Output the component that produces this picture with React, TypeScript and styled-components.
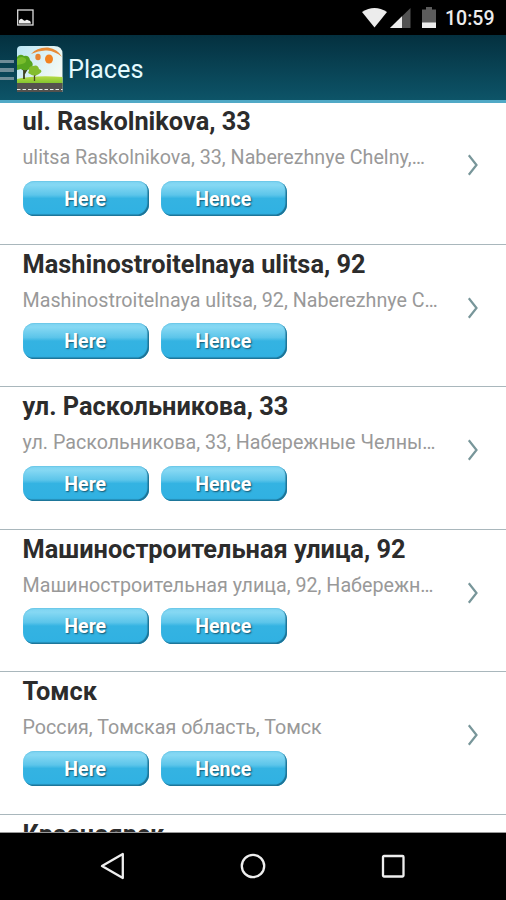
import React from 'react';
import styled, { createGlobalStyle } from 'styled-components';

const GlobalStyle = createGlobalStyle`
  * { box-sizing: border-box; }
  body { margin: 0; background: #000; font-family: Roboto, "Noto Sans", sans-serif; }
`;

const Screen = styled.div`
  display: flex;
  flex-direction: column;
  width: 506px;
  height: 900px;
  overflow: hidden;
  background: #fff;
`;

const StatusBar = styled.div`
  display: flex;
  align-items: center;
  justify-content: space-between;
  flex: none;
  height: 35px;
  padding: 0 11px 0 16px;
  background: #000;
`;

const StatusIcons = styled.div`
  display: flex;
  align-items: center;
`;

const SignalSlot = styled.span`
  display: flex;
  margin: 0 11px 0 3px;
`;

const Clock = styled.span`
  width: 50px;
  margin-left: 9px;
  padding-top: 3px;
  color: #ececec;
  font-size: 19.5px;
  font-weight: 500;
  line-height: 24px;
  white-space: nowrap;
`;

const Header = styled.header`
  display: flex;
  align-items: center;
  flex: none;
  height: 68px;
  background: linear-gradient(#04303f, #0d5468);
  border-bottom: 3px solid #50a9c6;
`;

const HeaderTitle = styled.h1`
  margin: 5px 0 0 5px;
  color: #e4fbff;
  font-size: 25.3px;
  font-weight: 400;
  line-height: 32px;
`;

const Drawer = styled.div`
  display: flex;
  flex-direction: column;
  gap: 5px;
  width: 17px;
  margin-top: 5px;
`;

const DrawerLine = styled.span`
  width: 14px;
  height: 3.5px;
  background: #6f8d98;
`;

const AppTile = styled.span`
  display: flex;
  margin-top: 2px;
`;

const List = styled.main`
  flex: none;
  height: 731px;
  overflow: hidden;
  margin-top: -1px;
  border-bottom: 1px solid #999;
`;

const Row = styled.section`
  display: flex;
  align-items: center;
  justify-content: space-between;
  height: 142.5px;
  padding: 0 27.5px 0 22.5px;
  border-bottom: 1px solid #a9b7bc;
`;

const LastRow = styled.section`
  padding: 0 22.5px;
`;

const RowBody = styled.div`
  align-self: flex-start;
`;

const PlaceName = styled.h2`
  margin: 4px 0 0;
  color: #2c2c2c;
  font-size: 25.35px;
  font-weight: 700;
  line-height: 31px;
  white-space: nowrap;
`;

const Address = styled.p`
  margin: 8px 0 0;
  color: #999;
  font-size: 19.7px;
  line-height: 26px;
  white-space: nowrap;
`;

const Actions = styled.div`
  display: flex;
  gap: 11.5px;
  margin-top: 9.5px;
`;

const ActionButton = styled.button`
  width: 126.5px;
  height: 35.5px;
  padding: 2px 1px 0 0;
  border: 0;
  border-radius: 11.5px;
  background: linear-gradient(#7fd4f2 0%, #85d8f3 12%, #5cc5ea 40%, #34b3e2 50%, #30b1e2 100%);
  box-shadow: inset -1.5px -1.5px 0.8px #1d7396, inset 0 1px 1px #6cc8e8;
  color: #fff;
  font-family: inherit;
  font-size: 19.5px;
  font-weight: 700;
  text-shadow: 1px 1px 1.5px #17566f;
`;

const ChevronSlot = styled.span`
  display: flex;
  margin-top: -15px;
`;

const NavBar = styled.nav`
  display: flex;
  align-items: center;
  justify-content: space-between;
  flex: 1;
  padding: 0 100px 1px;
  background: #000;
`;

const places = [
  { name: 'ul. Raskolnikova, 33', address: 'ulitsa Raskolnikova, 33, Naberezhnye Chelny,…' },
  { name: 'Mashinostroitelnaya ulitsa, 92', address: 'Mashinostroitelnaya ulitsa, 92, Naberezhnye C…' },
  { name: 'ул. Раскольникова, 33', address: 'ул. Раскольникова, 33, Набережные Челны…' },
  { name: 'Машиностроительная улица, 92', address: 'Машиностроительная улица, 92, Набережн…' },
  { name: 'Томск', address: 'Россия, Томская область, Томск' },
];

const PictureIcon = () => (
  <svg width="19" height="17" viewBox="0 0 19 17">
    <rect x="1.7" y="1" width="15.3" height="15" fill="none" stroke="#ddd" strokeWidth="1.3" />
    <path d="M3 14.5v-3q2-3 4-.8 1 1 2 1 2-2 3.500-.2 2-.5 2.500 3z" fill="#eee" />
  </svg>
);

const WifiIcon = () => (
  <svg width="25" height="20" viewBox="0 0 25 20">
    <path d="M0 4Q12.500-4 25 4L12.500 19.500Z" fill="#ececec" />
  </svg>
);

const SignalIcon = () => (
  <svg width="21" height="20" viewBox="0 0 21 20">
    <path d="M0 20 20.500 0V20Z" fill="#525252" />
    <path d="M0 20 12 8.300V20Z" fill="#ececec" />
  </svg>
);

const BatteryIcon = () => (
  <svg width="14" height="21" viewBox="0 0 14 21">
    <path d="M0 2.500H4V0H10V2.500H14V16H0Z" fill="#5c5c5c" />
    <path d="M0 15.500H14V21H0Z" fill="#ececec" />
  </svg>
);

const AppIcon = () => (
  <svg width="46" height="46" viewBox="0 0 46 46">
    <defs>
      <linearGradient id="sky" x1="0" y1="0" x2="1" y2=".6">
        <stop offset="0" stopColor="#bce6f5" />
        <stop offset="1" stopColor="#f7fbf4" />
      </linearGradient>
      <linearGradient id="grass" x1="0" y1="0" x2="0" y2="1">
        <stop offset="0" stopColor="#b6db43" />
        <stop offset="1" stopColor="#6dbb28" />
      </linearGradient>
      <clipPath id="tile"><path d="M0 4Q0 0 4 0H37Q45.500 0 45.500 8V46H0Z" /></clipPath>
    </defs>
    <g clipPath="url(#tile)">
      <rect width="46" height="46" fill="url(#sky)" />
      <path d="M14 8Q20 1 31 1.500Q41 3 45 11Q38 5 30 4.500Q22 4 14 8Z" fill="#e88a35" />
      <ellipse cx="21" cy="11" rx="2.700" ry="3.200" fill="#e88432" />
      <ellipse cx="32" cy="13" rx="4" ry="4.500" fill="#f28320" />
      <path d="M0 33Q18 29 46 31V40H0Z" fill="url(#grass)" />
      <path d="M7 33V24L2 20M7 28L11 21" stroke="#3d401f" strokeWidth="1.800" fill="none" />
      <path d="M0 11Q3 7 7 10Q12 9 13 14Q18 18 14 22Q9 26 4 23L0 24Z" fill="#56a51f" />
      <path d="M0 13Q5 9 9 13Q10 17 5 18L0 19Z" fill="#78bd2c" />
      <path d="M17.500 35V26M17.500 30L21 25" stroke="#4b4823" strokeWidth="1.300" />
      <path d="M12 25Q11 20 16 20Q21 18 22 23Q27 25 22 28Q17 31 13 28Q10 27 12 25Z" fill="#83bd2d" />
      <rect y="37" width="46" height="9" fill="#55524e" />
      <path d="M0 43.500H46" stroke="#e8eeee" strokeWidth="1.200" strokeDasharray="3.500 2" />
    </g>
  </svg>
);

const Chevron = () => (
  <svg width="12" height="22" viewBox="0 0 12 22">
    <path d="M1.800 1.300 9.500 11 1.800 20.700" fill="none" stroke="#78969a" strokeWidth="2.200" />
  </svg>
);

const App = () => (
  <>
    <GlobalStyle />
    <Screen>
      <StatusBar>
        <PictureIcon />
        <StatusIcons>
          <WifiIcon />
          <SignalSlot><SignalIcon /></SignalSlot>
          <BatteryIcon />
          <Clock>10:59</Clock>
        </StatusIcons>
      </StatusBar>
      <Header>
        <Drawer><DrawerLine /><DrawerLine /><DrawerLine /></Drawer>
        <AppTile><AppIcon /></AppTile>
        <HeaderTitle>Places</HeaderTitle>
      </Header>
      <List>
        {places.map((place) => (
          <Row key={place.name}>
            <RowBody>
              <PlaceName>{place.name}</PlaceName>
              <Address>{place.address}</Address>
              <Actions>
                <ActionButton>Here</ActionButton>
                <ActionButton>Hence</ActionButton>
              </Actions>
            </RowBody>
            <ChevronSlot><Chevron /></ChevronSlot>
          </Row>
        ))}
        <LastRow>
          <PlaceName>Красноярск</PlaceName>
        </LastRow>
      </List>
      <NavBar>
        <svg width="26" height="28" viewBox="0 0 26 28">
          <path d="M2 14 22.800 2V26Z" fill="none" stroke="#eee" strokeWidth="2.300" strokeLinejoin="round" />
        </svg>
        <svg width="26" height="26" viewBox="0 0 26 26">
          <circle cx="13" cy="13" r="11.200" fill="none" stroke="#eee" strokeWidth="2.300" />
        </svg>
        <svg width="26" height="26" viewBox="0 0 26 26">
          <rect x="3" y="3" width="20.500" height="20.500" rx="1" fill="none" stroke="#eee" strokeWidth="2.300" />
        </svg>
      </NavBar>
    </Screen>
  </>
);

export default App;
